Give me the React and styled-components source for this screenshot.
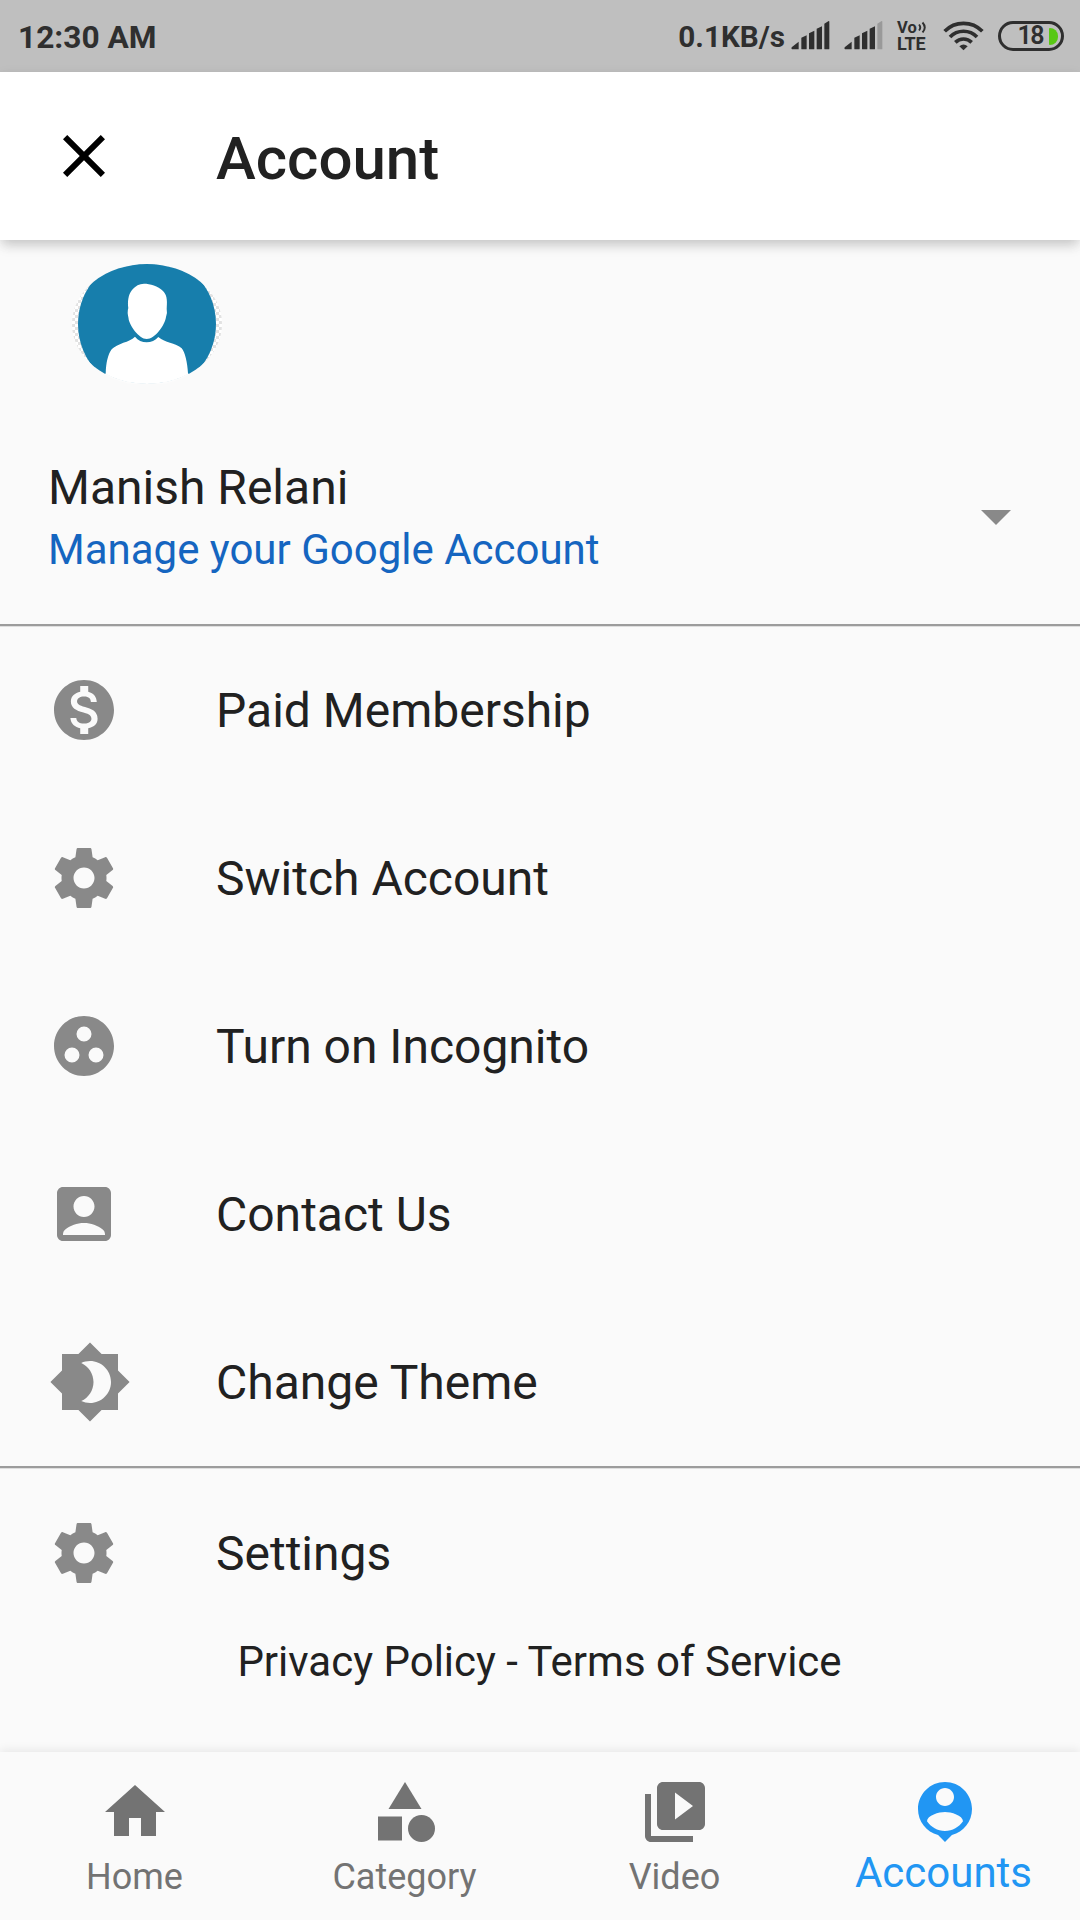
import React from "react";
import styled, { createGlobalStyle } from "styled-components";
import {
  MdClose,
  MdArrowDropDown,
  MdMonetizationOn,
  MdGroupWork,
  MdAccountBox,
  MdBrightness4,
  MdHome,
  MdCategory,
  MdVideoLibrary,
} from "react-icons/md";

const Global = createGlobalStyle`
  * { box-sizing: border-box; }
  body { margin: 0; background: #fafafa; font-family: Roboto, "Noto Sans", sans-serif; }
  svg { display: block; flex: none; }
`;

const Screen = styled.div`
  width: 1080px;
  height: 1920px;
  display: flex;
  flex-direction: column;
  background: #fafafa;
  color: #212121;
  overflow: hidden;
`;

const StatusBar = styled.div`
  height: 72px;
  flex: none;
  display: flex;
  justify-content: space-between;
  background: #bfbfbf;
  color: #2f2f2f;
  padding: 0 16px 0 18px;
`;

const Clock = styled.span`
  font-size: 31.7px;
  font-weight: 700;
  line-height: 76px;
`;

const StatusIcons = styled.div`
  display: flex;
  align-items: flex-start;
`;

const Speed = styled.span`
  font-size: 29.7px;
  font-weight: 700;
  line-height: 74px;
  margin-right: 6px;
`;

const Glyph = styled.svg`
  width: ${(p) => p.$w}px;
  height: ${(p) => p.$h}px;
  margin: ${(p) => p.$top}px ${(p) => p.$right}px 0 0;
`;

const Volte = styled.div`
  width: 32px;
  margin: 20px 14px 0 0;
  font-weight: 700;
`;

const VolteTop = styled.div`
  display: flex;
  align-items: flex-start;
  font-size: 16.500px;
  line-height: 16px;
  height: 16px;
  gap: 1px;
`;

const VolteBottom = styled.div`
  font-size: 18px;
  line-height: 16px;
  letter-spacing: -0.2px;
`;

const Battery = styled.div`
  width: 66px;
  height: 30px;
  margin-top: 21px;
  border: 3px solid #2f2f2f;
  border-radius: 15px;
  display: flex;
  align-items: center;
  justify-content: flex-end;
  padding-right: 3px;
  gap: 6px;
  font-size: 25px;
  font-weight: 600;
  letter-spacing: -1.500px;
  line-height: 24px;
`;

const Charge = styled.span`
  width: 9px;
  height: 17px;
  background: #58c813;
  border-radius: 1px 9px 9px 1px;
`;

const AppBar = styled.header`
  height: 168px;
  flex: none;
  display: flex;
  align-items: center;
  padding-left: 48px;
  background: #fff;
  position: relative;
  box-shadow: 0 6px 12px -3px rgba(0, 0, 0, 0.16), 0 10px 12px rgba(0, 0, 0, 0.03),
    0 3px 12px rgba(0, 0, 0, 0.07);
`;

const Title = styled.h1`
  margin: 6px 0 0 96px;
  font-size: 60px;
  font-weight: 500;
  line-height: 70px;
`;

const Content = styled.main`
  flex: 1;
  display: flex;
  flex-direction: column;
`;

const Profile = styled.section`
  height: 384px;
  padding: 24px 48px 0;
`;

const AvatarArt = styled.svg`
  width: 150px;
  height: 120px;
  margin-left: 24px;
`;

const ProfileRow = styled.div`
  display: flex;
  justify-content: space-between;
  margin-top: 76px;
`;

const Name = styled.div`
  font-size: 48px;
  line-height: 56px;
`;

const Manage = styled.a`
  display: block;
  margin-top: 7px;
  font-size: 42px;
  line-height: 54px;
  color: #1565c0;
`;

const DropArrow = styled(MdArrowDropDown)`
  margin-top: 20px;
  color: #898989;
`;

const List = styled.ul`
  list-style: none;
  margin: 0;
  padding: ${(p) => (p.$after ? "1px 0 0" : "0")};
  border-top: 2px solid #9c9c9c;
  box-shadow: inset 0 1px 0 #dedede;
`;

const Tile = styled.li`
  height: 168px;
  display: flex;
  align-items: center;
  padding-left: 48px;
`;

const TileIcon = styled.span`
  width: 168px;
  color: #898989;
`;

const TileLabel = styled.span`
  padding-top: 2px;
  font-size: 48px;
  line-height: 56px;
`;

const Legal = styled.div`
  padding-right: 1px;
  font-size: 42px;
  line-height: 50px;
  text-align: center;
`;

const NavBar = styled.nav`
  height: 168px;
  flex: none;
  display: grid;
  grid-template-columns: repeat(4, 1fr);
  background: #fafafa;
  box-shadow: 0 -2px 9px rgba(0, 0, 0, 0.08);
`;

const NavItem = styled.a`
  display: flex;
  flex-direction: column;
  align-items: center;
  padding-top: 24px;
  color: ${(p) => (p.$active ? "#2196f3" : "#737373")};
`;

const NavLabel = styled.span`
  margin-top: ${(p) => (p.$active ? 5 : 6)}px;
  padding-right: ${(p) => (p.$active ? 3 : 1)}px;
  font-size: ${(p) => (p.$active ? 42 : 36)}px;
  line-height: ${(p) => (p.$active ? 40 : 46)}px;
`;

const Gear = ({ size }) => (
  <svg width={size} height={size} viewBox="0 0 24 24" fill="currentColor">
    <path d="M19.43 12.98c.04-.32.07-.64.07-.98s-.03-.66-.07-.98l2.11-1.65c.19-.15.24-.42.12-.64l-2-3.46c-.12-.22-.39-.3-.61-.22l-2.49 1c-.52-.4-1.08-.73-1.69-.98l-.38-2.65C14.46 2.18 14.25 2 14 2h-4c-.25 0-.46.18-.49.42l-.38 2.65c-.61.25-1.17.59-1.69.98l-2.49-1c-.23-.09-.49 0-.61.22l-2 3.46c-.13.22-.07.49.12.64l2.11 1.65c-.04.32-.07.65-.07.98s.03.66.07.98l-2.11 1.65c-.19.15-.24.42-.12.64l2 3.46c.12.22.39.3.61.22l2.49-1c.52.4 1.08.73 1.69.98l.38 2.65c.03.24.24.42.49.42h4c.25 0 .46-.18.49-.42l.38-2.65c.61-.25 1.17-.59 1.69-.98l2.49 1c.23.09.49 0 .61-.22l2-3.46c.12-.22.07-.49-.12-.64l-2.11-1.65zM12 15.5c-1.93 0-3.5-1.57-3.5-3.5s1.57-3.5 3.5-3.5 3.5 1.57 3.5 3.5-1.57 3.5-3.5 3.5z" />
  </svg>
);

const PersonPin = ({ size }) => (
  <svg width={size} height={size} viewBox="0 0 24 24" fill="currentColor">
    <path d="M12 2c-4.97 0-9 4.03-9 9 0 4.17 2.84 7.67 6.69 8.69L12 22l2.31-2.31C18.16 18.67 21 15.17 21 11c0-4.97-4.03-9-9-9zm0 2c1.66 0 3 1.34 3 3s-1.34 3-3 3-3-1.34-3-3 1.34-3 3-3zm0 14.3c-2.5 0-4.71-1.28-6-3.22.03-1.99 4-3.08 6-3.08 1.99 0 5.97 1.09 6 3.08-1.29 1.94-3.5 3.22-6 3.22z" />
  </svg>
);

const Signal = ({ last = "#2f2f2f", right }) => (
  <Glyph $w={39} $h={30} $top={20} $right={right} viewBox="0 0 117 90" fill="#2f2f2f">
    <path d="M2 82L23 65V88H3q-3-1-1-6zM31 53L47 46V86q0 2-2 2H33q-2 0-2-2zM54 40L70 32V86q0 2-2 2H56q-2 0-2-2zM77 26L93 19V86q0 2-2 2H79q-2 0-2-2z" />
    <path fill={last} d="M100 11L113 3q2 0 2 2V86q0 2-2 2H102q-2 0-2-2z" />
  </Glyph>
);

const Wifi = () => (
  <Glyph $w={41} $h={30} $top={21} $right={14} viewBox="0 0 123 90" fill="none" stroke="#2f2f2f" strokeWidth="11">
    <path d="M5 31A79 79 0 0 1 118 31M21 48A56 56 0 0 1 102 48M37 64A35 35 0 0 1 86 64" />
    <path d="M49 76q12.500-11 25 0L61.500 88z" fill="#2f2f2f" stroke="none" />
  </Glyph>
);

const Avatar = () => (
  <AvatarArt viewBox="0 0 150 120">
    <defs>
      <clipPath id="oval">
        <ellipse cx="75" cy="60" rx="75" ry="60" />
      </clipPath>
      <pattern id="checks" width="6" height="6" patternUnits="userSpaceOnUse">
        <rect width="6" height="6" fill="#fff" />
        <path d="M0 0h3v3H0zM3 3h3v3H3z" fill="#e2e2e2" />
      </pattern>
    </defs>
    <g clipPath="url(#oval)">
      <rect width="150" height="120" fill="url(#checks)" />
      <circle cx="75" cy="60" r="69" fill="#177eac" />
      <path
        fill="#fff"
        d="M72 19.700C78 19.700 86 22 91 27C96 32 95 39 94.700 45Q95.500 48 94 53C93 61 83 75 74.700 75C67 75 57 61 56.500 54Q55 48 56.300 44C55.500 38 56 31 60 26C64 21.500 67 20 72 19.700zM63 72.700C66 76.500 70 78.300 74.700 78.300C79 78.300 83.500 76.500 86.300 73C90 76 94 77.500 98 78.700C102 80 107 81.500 109.700 84.300C113 88 115.500 99 116 109.300V120H33.700V109.300C34 99 36 90 39.700 85.300C42 82.500 47 80.500 51.300 78.700C56 77.500 60 75.500 63 72.700z"
      />
    </g>
    <path
      d="M33 110.100A75 60 0 0 0 117 110.100"
      fill="none"
      stroke="#fcfcfc"
      strokeWidth="1.600"
    />
  </AvatarArt>
);

const menu = [
  { label: "Paid Membership", Icon: MdMonetizationOn, size: 72 },
  { label: "Switch Account", Icon: Gear, size: 72 },
  { label: "Turn on Incognito", Icon: MdGroupWork, size: 72 },
  { label: "Contact Us", Icon: MdAccountBox, size: 72 },
  { label: "Change Theme", Icon: MdBrightness4, size: 84 },
];

const tabs = [
  { label: "Home", Icon: MdHome },
  { label: "Category", Icon: MdCategory },
  { label: "Video", Icon: MdVideoLibrary },
  { label: "Accounts", Icon: PersonPin, active: true },
];

const MenuTile = ({ label, Icon, size }) => (
  <Tile>
    <TileIcon>
      <Icon size={size} />
    </TileIcon>
    <TileLabel>{label}</TileLabel>
  </Tile>
);

export default function App() {
  return (
    <Screen>
      <Global />
      <StatusBar>
        <Clock>12:30 AM</Clock>
        <StatusIcons>
          <Speed>0.1KB/s</Speed>
          <Signal right={14} />
          <Signal right={14} last="#999" />
          <Volte>
            <VolteTop>
              <span>Vo</span>
              <svg width="9" height="13" viewBox="0 0 9 13" fill="none" stroke="#2f2f2f" strokeWidth="1.900">
                <path d="M1 4.500q2.500 3 0 6M4.500 2.500q4.500 5 0 10" />
              </svg>
            </VolteTop>
            <VolteBottom>LTE</VolteBottom>
          </Volte>
          <Wifi />
          <Battery>
            18
            <Charge />
          </Battery>
        </StatusIcons>
      </StatusBar>
      <AppBar>
        <MdClose size={72} color="#000" />
        <Title>Account</Title>
      </AppBar>
      <Content>
        <Profile>
          <Avatar />
          <ProfileRow>
            <div>
              <Name>Manish Relani</Name>
              <Manage>Manage your Google Account</Manage>
            </div>
            <DropArrow size={72} />
          </ProfileRow>
        </Profile>
        <List>
          {menu.map((item) => (
            <MenuTile key={item.label} {...item} />
          ))}
        </List>
        <List $after>
          <MenuTile label="Settings" Icon={Gear} size={72} />
        </List>
        <Legal>Privacy Policy - Terms of Service</Legal>
      </Content>
      <NavBar>
        {tabs.map(({ label, Icon, active }) => (
          <NavItem key={label} $active={active}>
            <Icon size={72} />
            <NavLabel $active={active}>{label}</NavLabel>
          </NavItem>
        ))}
      </NavBar>
    </Screen>
  );
}
